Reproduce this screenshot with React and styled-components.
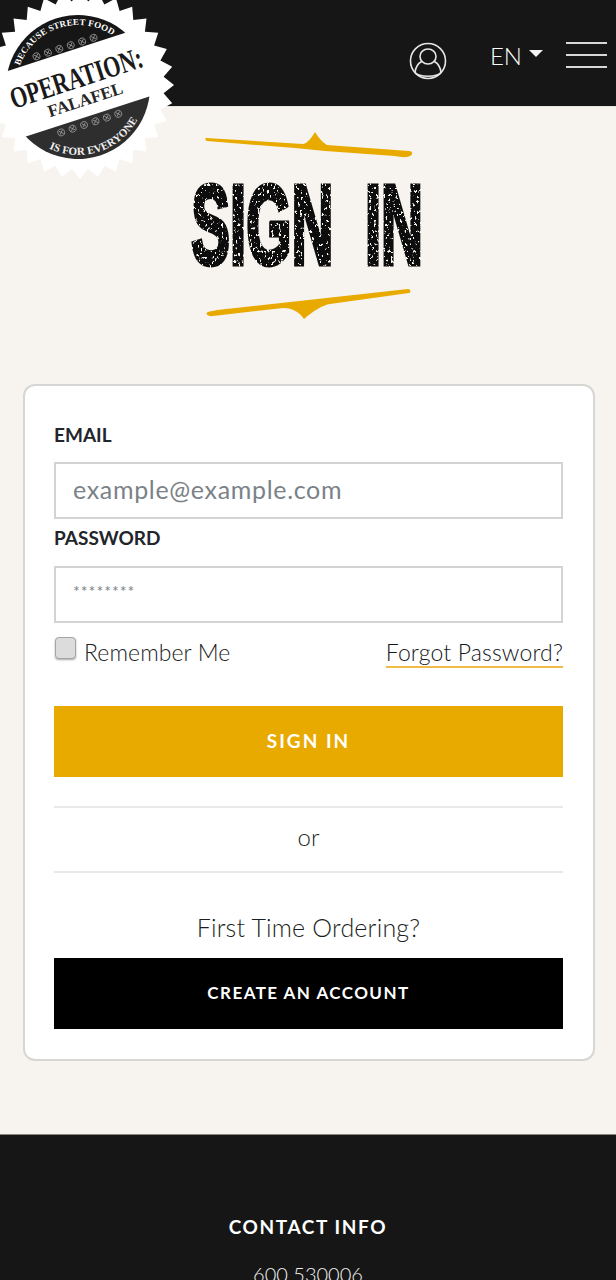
import React from 'react';
import styled, { createGlobalStyle } from 'styled-components';

const GlobalStyle = createGlobalStyle`
  * { box-sizing: border-box; }
  html, body { margin: 0; padding: 0; background: #f7f4ef; }
  body { font-family: Lato, "Open Sans", sans-serif; color: #212529; }
`;

const Page = styled.div`
  position: relative;
  width: 616px;
  height: 1280px;
  overflow: hidden;
`;

const Header = styled.header`
  height: 107px;
  background: #161616;
  border-bottom: 1px solid #e8e4dc;
  display: flex;
  align-items: flex-start;
  justify-content: flex-end;
  padding: 42px 9px 0 0;
`;

const AccountIcon = styled.svg`
  width: 38px;
  height: 38px;
  margin-right: 43px;
`;

const Lang = styled.div`
  display: flex;
  align-items: center;
  height: 26px;
  margin-right: 23px;
  color: #fff;
  font-size: 24px;
  font-weight: 300;
`;

const Caret = styled.span`
  width: 0;
  height: 0;
  margin: -3px 0 0 7px;
  border-left: 7px solid transparent;
  border-right: 7px solid transparent;
  border-top: 7px solid #f2f2f2;
`;

const Burger = styled.div`
  width: 41px;
  display: flex;
  flex-direction: column;
  gap: 10px;
`;

const BurgerLine = styled.span`
  height: 2px;
  background: #d8d8d8;
`;

const StampSvg = styled.svg`
  position: absolute;
  left: 0;
  top: 0;
  width: 180px;
  height: 182px;
`;

const Main = styled.main`
  height: 1028px;
  padding: 23px 21px 0 23px;
  border-bottom: 1px solid #8a857c;
`;

const TitleBlock = styled.div`
  display: flex;
  flex-direction: column;
  align-items: center;
  margin-bottom: 65px;
`;

const Flourish = styled.svg`
  display: block;
  width: 210px;
  height: 32px;
  margin-left: 2px;
`;

const Title = styled.h1`
  margin: 15px 0 15px;
  height: 95px;
  width: 260px;
  font-family: "Liberation Sans", Arial, sans-serif;
  font-weight: 700;
  font-size: 114px;
  line-height: 95px;
  color: #0d0d0d;
  text-align: center;
  white-space: pre;
  filter: url(#grunge);
`;

const TitleInner = styled.span`
  display: inline-block;
  transform: translateX(-2px) scaleX(0.51);
  transform-origin: center;
  margin: 0 -100px;
  word-spacing: 30px;
  -webkit-text-stroke: 5px #0d0d0d;
`;

const Card = styled.form`
  height: 677px;
  background: #fff;
  border: 2px solid #d6d6d4;
  border-radius: 12px;
  padding: 37px 30px 0 29px;
`;

const Label = styled.label`
  display: block;
  height: 24px;
  line-height: 24px;
  font-size: 19px;
  font-weight: 700;
  color: #22262a;
`;

const Input = styled.input`
  display: block;
  width: 100%;
  height: 57px;
  margin: ${(p) => (p.$first ? '15px 0 7px' : '16px 0 14px')};
  padding: ${(p) => (p.$stars ? '0 0 16px 17px' : '0 17px 3px')};
  border: 2px solid #d3d3d3;
  background: #fff;
  outline: none;
  font-family: inherit;
  font-size: 25px;
  color: #6c757d;
  &::placeholder {
    color: #7a8288;
    opacity: 1;
    font-size: ${(p) => (p.$stars ? '16px' : '25px')};
    letter-spacing: ${(p) => (p.$stars ? '1px' : '0.67px')};
  }
`;

const OptionsRow = styled.div`
  display: flex;
  align-items: flex-start;
  justify-content: space-between;
  height: 69px;
`;

const Remember = styled.label`
  display: flex;
  align-items: flex-start;
  font-size: 23px;
  font-weight: 300;
  line-height: 30px;
  letter-spacing: 0.1px;
  color: #222;
`;

const Checkbox = styled.input`
  appearance: none;
  width: 21px;
  height: 22px;
  margin: 0 8px 0 1px;
  background: #dcdcdc;
  border: 1px solid #a5a5a5;
  border-radius: 4px;
  box-shadow: 0 1px 2px rgba(0, 0, 0, 0.35);
`;

const ForgotLink = styled.a`
  display: block;
  height: 31px;
  font-size: 23px;
  font-weight: 300;
  line-height: 30px;
  letter-spacing: 0.15px;
  color: #14171a;
  border-bottom: 2px solid #f0bb48;
`;

const Button = styled.button`
  display: block;
  width: 100%;
  height: 71px;
  padding: 0 0 2px;
  border: none;
  background: ${(p) => (p.$dark ? '#000' : '#e9aa00')};
  color: #fff;
  font-family: inherit;
  font-weight: 700;
  font-size: ${(p) => (p.$dark ? '17px' : '19px')};
  letter-spacing: ${(p) => (p.$dark ? '1.45px' : '2px')};
  text-transform: uppercase;
`;

const OrRow = styled.div`
  height: 67px;
  margin-top: 29px;
  border-top: 2px solid #e9e9e9;
  border-bottom: 2px solid #e9e9e9;
  text-align: center;
  font-size: 24px;
  font-weight: 300;
  line-height: 58px;
  color: #1c1f22;
`;

const FirstTime = styled.p`
  margin: 0;
  height: 85px;
  padding-top: 36px;
  text-align: center;
  font-size: 25px;
  font-weight: 300;
  line-height: 36px;
  letter-spacing: 0.2px;
  color: #1c1f22;
`;

const Footer = styled.footer`
  height: 145px;
  background: #161616;
  padding-top: 78px;
  text-align: center;
  color: #fff;
`;

const FooterTitle = styled.h4`
  margin: 0;
  font-size: 19px;
  font-weight: 700;
  line-height: 28px;
  letter-spacing: 1.6px;
`;

const FooterLine = styled.p`
  margin: 19px 0 0;
  font-size: 20px;
  font-weight: 300;
  line-height: 28px;
  color: #f2f2f2;
`;

// starburst outline for the stamp
const burstPoints = (cx, cy, outer, inner, spikes) => {
  const pts = [];
  for (let i = 0; i < spikes * 2; i++) {
    const r = i % 2 === 0 ? outer : inner;
    const a = (Math.PI * i) / spikes;
    pts.push(`${(cx + r * Math.cos(a)).toFixed(1)},${(cy + r * Math.sin(a)).toFixed(1)}`);
  }
  return pts.join(' ');
};

const StampDots = ({ y }) => (
  <g fill="none" stroke="#8f8f8f" strokeWidth="0.9">
    {[-30, -18, -6, 6, 18, 30].map((x) => (
      <g key={x}>
        <circle cx={x} cy={y} r="3.4" />
        <path d={`M${x - 2} ${y - 2}L${x + 2} ${y + 2}M${x + 2} ${y - 2}L${x - 2} ${y + 2}`} />
      </g>
    ))}
  </g>
);

const Stamp = () => (
  <StampSvg viewBox="0 0 180 182">
    <defs>
      <clipPath id="stampTop">
        <rect x="-90" y="-90" width="180" height="53" />
      </clipPath>
      <clipPath id="stampBottom">
        <rect x="-90" y="31" width="180" height="60" />
      </clipPath>
      <path id="arcTop" d="M-62 0A62 62 0 0 1 62 0" />
      <path id="arcBottom" d="M-68 0A68 68 0 0 0 68 0" />
    </defs>
    <polygon points={burstPoints(80, 85, 94, 84, 32)} fill="#fff" />
    <g transform="translate(78 87) rotate(-18)">
      <circle r="72" fill="#161616" clipPath="url(#stampTop)" />
      <circle r="72" fill="#2e2e2e" clipPath="url(#stampBottom)" />
      <StampDots y={-42} />
      <StampDots y={38} />
      <text fontFamily="Liberation Serif, serif" fontWeight="700" fontSize="9" letterSpacing="0.2" fill="#fff" textAnchor="middle">
        <textPath href="#arcTop" startOffset="50%">BECAUSE STREET FOOD</textPath>
      </text>
      <text fontFamily="Liberation Serif, serif" fontWeight="700" fontSize="11" letterSpacing="0.1" fill="#f2f2f2" textAnchor="middle">
        <textPath href="#arcBottom" startOffset="50%">IS FOR EVERYONE</textPath>
      </text>
      <text x="-68" y="1" textLength="138" lengthAdjust="spacingAndGlyphs" fontFamily="Liberation Serif, serif" fontWeight="700" fontSize="30" fill="#1a1a1a">OPERATION:</text>
      <text x="-36" y="20" textLength="78" lengthAdjust="spacingAndGlyphs" fontFamily="Liberation Serif, serif" fontWeight="700" fontSize="17" fill="#262626">FALAFEL</text>
    </g>
  </StampSvg>
);

const App = () => (
  <Page>
    <GlobalStyle />
    <svg width="0" height="0" style={{ position: 'absolute' }} aria-hidden="true">
      <filter id="grunge" x="0" y="0" width="100%" height="100%">
        <feTurbulence type="fractalNoise" baseFrequency="0.42 0.3" numOctaves="3" seed="7" result="noise" />
        <feColorMatrix in="noise" type="matrix" values="0 0 0 0 0  0 0 0 0 0  0 0 0 0 0  0 0 0 -14 9.8" result="mask" />
        <feComposite in="SourceGraphic" in2="mask" operator="in" />
      </filter>
    </svg>
    <Header>
      <AccountIcon viewBox="0 0 38 38" fill="none" stroke="#e6e6e6" strokeWidth="1.6">
        <circle cx="19" cy="19" r="17.5" />
        <ellipse cx="19" cy="14.5" rx="8" ry="7.5" />
        <path d="M12.5 19.5C9 21.5 6.5 26 6 30.5C10 35.5 28 35.5 32 30.5C31.5 26 29 21.5 25.5 19.5" strokeLinecap="round" />
      </AccountIcon>
      <Lang>EN<Caret /></Lang>
      <Burger>
        <BurgerLine />
        <BurgerLine />
        <BurgerLine />
      </Burger>
    </Header>
    <Stamp />
    <Main>
      <TitleBlock>
        <Flourish viewBox="0 0 210 32" fill="#e9aa00">
          <path d="M1 8L98 14C103 13 107 7 110 2C113 7 117 12 122 15L204 21C208 21 208 25 205 26C200 28 196 27 190 26L120 21C110 20 100 19 90 18L2 11C0 10 0 8 1 8Z" />
        </Flourish>
        <Title><TitleInner>SIGN IN</TitleInner></Title>
        <Flourish viewBox="0 0 210 32" fill="#e9aa00">
          <path d="M3 25C10 23 20 22 30 21L203 2C206 2 206 6 204 6L125 17C118 18 108 24 99 32C94 25 88 21 78 21L8 29C2 30 0 26 3 25Z" />
        </Flourish>
      </TitleBlock>
      <Card>
        <Label>EMAIL</Label>
        <Input $first placeholder="example@example.com" />
        <Label>PASSWORD</Label>
        <Input $stars placeholder="********" />
        <OptionsRow>
          <Remember><Checkbox type="checkbox" />Remember Me</Remember>
          <ForgotLink>Forgot Password?</ForgotLink>
        </OptionsRow>
        <Button type="button">Sign In</Button>
        <OrRow>or</OrRow>
        <FirstTime>First Time Ordering?</FirstTime>
        <Button type="button" $dark>Create An Account</Button>
      </Card>
    </Main>
    <Footer>
      <FooterTitle>CONTACT INFO</FooterTitle>
      <FooterLine>600 530006</FooterLine>
    </Footer>
  </Page>
);

export default App;
